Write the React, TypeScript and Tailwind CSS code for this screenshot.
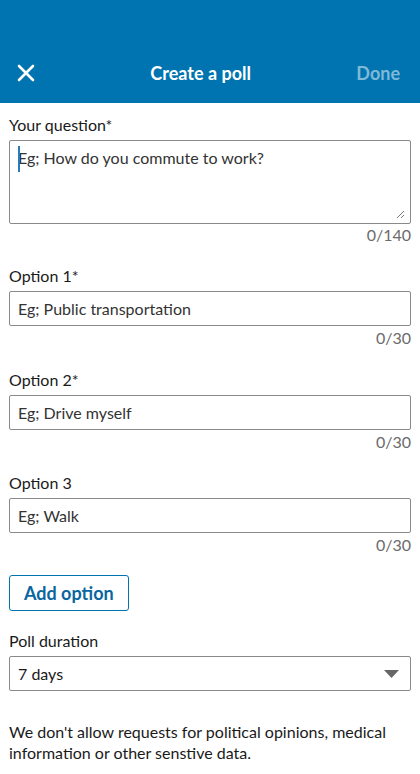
import React from 'react';

const font = { fontFamily: 'Lato, "Open Sans", sans-serif' };

function Field({ label, placeholder, max, top }: { label: string; placeholder: string; max: number; top: string }) {
  return (
    <div className={`flex flex-col ${top}`}>
      <label className="text-[16px] leading-[20px] text-[#1a1a1a]">{label}</label>
      <div className="mt-[5px] h-[35px] border border-[#8a8a8a] rounded-[2px] flex items-center px-2 text-[16px] text-[#333]">
        {placeholder}
      </div>
      <div className="mt-[2px] text-right text-[16px] leading-[20px] text-[#6b6b6b]">0/{max}</div>
    </div>
  );
}

export default function App() {
  return (
    <div className="w-[420px] h-[774px] bg-white overflow-hidden" style={font}>
      <header className="h-[103px] bg-[#0073b1] pt-[49px]">
        <div className="h-12 flex items-center pl-[17px] pr-5">
          <svg width="18" height="18" viewBox="0 0 18 18" fill="none" stroke="white" strokeWidth="2.6" strokeLinecap="round">
            <path d="M2 2 L16 16 M16 2 L2 16" />
          </svg>
          <h1 className="flex-1 ml-[10px] text-center text-[18px] font-bold text-white">Create a poll</h1>
          <button className="text-[18px] font-bold text-white/50">Done</button>
        </div>
      </header>

      <main className="px-[9px] flex flex-col text-[#1a1a1a]">
        <label className="mt-[12px] text-[16px] leading-[20px]">Your question*</label>
        <div className="relative mt-[5px] h-[84px] border border-[#8a8a8a] rounded-[2px] px-2 pt-[6px] text-[16px] leading-[22px] text-[#333]">
          <span className="absolute left-[8px] top-[5px] w-[2px] h-[26px] bg-[#2b7bb9]" />
          Eg; How do you commute to work?
          <svg className="absolute right-[5px] bottom-[4px]" width="9" height="9" viewBox="0 0 9 9" stroke="#777" strokeWidth="1">
            <path d="M1 8 L8 1 M5 8 L8 5" />
          </svg>
        </div>
        <div className="mt-[1px] text-right text-[16px] leading-[20px] text-[#6b6b6b]">0/140</div>

        <Field label="Option 1*" placeholder="Eg; Public transportation" max={30} top="mt-[21px]" />
        <Field label="Option 2*" placeholder="Eg; Drive myself" max={30} top="mt-[22px]" />
        <Field label="Option 3" placeholder="Eg; Walk" max={30} top="mt-[21px]" />

        <button className="mt-[20px] self-start h-[36px] px-[14px] border border-[#0073b1] rounded-[3px] text-[18px] font-bold text-[#0a66a0]">
          Add option
        </button>

        <label className="mt-[20px] text-[16px] leading-[20px]">Poll duration</label>
        <div className="mt-[5px] h-[35px] border border-[#8a8a8a] rounded-[2px] flex items-center justify-between pl-2 pr-[11px] text-[16px] text-[#1a1a1a]">
          <span>7 days</span>
          <svg width="15" height="8" viewBox="0 0 15 8">
            <path d="M0 0 H15 L7.5 8 Z" fill="#666" />
          </svg>
        </div>

        <p className="mt-[30px] text-[16px] leading-[21px] text-[#1a1a1a]">
          We don't allow requests for political opinions, medical information or other senstive data.
        </p>
      </main>
    </div>
  );
}
